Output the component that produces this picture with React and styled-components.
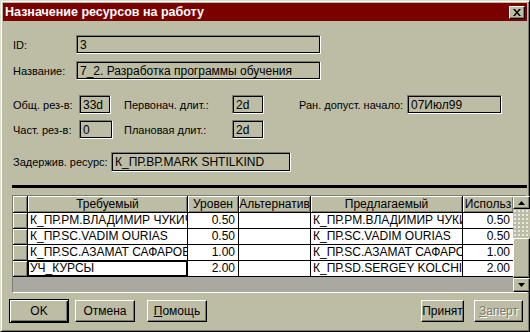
import styled, { createGlobalStyle } from "styled-components";

const KHAKI = "#bdbda5";
const SHADOW = "#7b7b6b";

const Global = createGlobalStyle`
  body {
    margin: 0;
    background: ${KHAKI};
    font-family: "Liberation Sans", Arial, sans-serif;
    font-size: 11px;
    color: #000;
  }
`;

const Window = styled.div`
  box-sizing: border-box;
  width: 530px;
  height: 332px;
  background: ${KHAKI};
  border: 1px solid;
  border-color: #dedece #000 #000 #dedece;
  box-shadow: inset 1px 1px 0 #fff, inset -1px -1px 0 ${SHADOW};
  padding: 2px;
  display: flex;
  flex-direction: column;
`;

const TitleBar = styled.div`
  height: 18px;
  background: #7b0000;
  color: #fff;
  font-weight: bold;
  font-size: 12.5px;
  display: flex;
  align-items: center;
  justify-content: space-between;
  padding: 0 2px 0 2px;
`;

const CloseButton = styled.div`
  box-sizing: border-box;
  width: 16px;
  height: 13px;
  background: ${KHAKI};
  border: 1px solid;
  border-color: #fff #000 #000 #fff;
  box-shadow: inset -1px -1px 0 ${SHADOW};
  display: flex;
  align-items: center;
  justify-content: center;
`;

const Body = styled.div`
  display: flex;
  flex-direction: column;
  padding: 0 0 0 6px;
`;

const Row = styled.div`
  display: flex;
  align-items: center;
  margin-top: ${(p) => p.$top}px;
  padding-left: 4px;
`;

const Label = styled.div`
  width: ${(p) => p.$w}px;
  flex: none;
  white-space: nowrap;
`;

const Field = styled.div`
  box-sizing: border-box;
  width: ${(p) => p.$w}px;
  height: ${(p) => p.$h || 19}px;
  flex: none;
  margin-right: ${(p) => p.$mr || 0}px;
  border: 1px solid;
  border-color: ${SHADOW} #fff #fff ${SHADOW};
  box-shadow: inset 1px 1px 0 #000, inset -1px -1px 0 #000;
  padding: 2px 3px 0;
  font-size: 12px;
  line-height: 14px;
  white-space: nowrap;
  overflow: hidden;
`;

const Divider = styled.div`
  margin: 13px 0 0 3px;
  height: 3px;
  background: #000;
`;

const TableFrame = styled.div`
  margin: 7px 0 0 3px;
  height: 98px;
  box-sizing: border-box;
  border: 1px solid;
  border-color: ${SHADOW} #fff #fff ${SHADOW};
  display: flex;
`;

const GridArea = styled.div`
  flex: 1;
  display: flex;
  flex-direction: column;
  background: #a9a9a1;
`;

const Grid = styled.div`
  display: grid;
  grid-template-columns: 14px 159px 50px 71px 151px 50px;
  grid-template-rows: 16px repeat(4, 15px);
  gap: 1px;
  background: #000;
  border-bottom: 1px solid #000;
`;

const HeadCell = styled.div`
  background: ${KHAKI};
  box-shadow: inset 1px 1px 0 #fff, inset -1px -1px 0 ${SHADOW};
  display: flex;
  align-items: center;
  justify-content: center;
  font-size: 12px;
  white-space: nowrap;
  overflow: hidden;
`;

const Cell = styled.div`
  background: #fff;
  display: flex;
  align-items: center;
  justify-content: ${(p) => (p.$num ? "flex-end" : "flex-start")};
  padding: ${(p) => (p.$num ? "0 3px 0 0" : "0 0 0 2px")};
  font-size: 12px;
  line-height: 15px;
  white-space: nowrap;
  overflow: hidden;
  box-sizing: border-box;
  box-shadow: ${(p) => (p.$focus ? "inset 0 0 0 1px #000" : "none")};
`;

const ScrollBar = styled.div`
  width: 17px;
  flex: none;
  display: flex;
  flex-direction: column;
`;

const ScrollButton = styled.div`
  box-sizing: border-box;
  height: ${(p) => p.$h}px;
  background: ${KHAKI};
  border: 1px solid;
  border-color: #fff #000 #000 #fff;
  box-shadow: inset -1px -1px 0 ${SHADOW};
  display: flex;
  align-items: center;
  justify-content: center;
`;

const Track = styled.div`
  height: ${(p) => p.$h}px;
  background-color: ${KHAKI};
  background-image: radial-gradient(#ecece0 0.7px, transparent 0.8px);
  background-size: 4px 4px;
`;

const Footer = styled.div`
  display: flex;
  align-items: center;
  margin: 6px 0 0 0;
`;

const Button = styled.div`
  box-sizing: border-box;
  width: ${(p) => p.$w}px;
  height: ${(p) => (p.$default ? 24 : 22)}px;
  margin-left: ${(p) => p.$ml}px;
  background: ${KHAKI};
  border: 1px solid;
  border-color: ${(p) => (p.$default ? "#000" : "#fff #000 #000 #fff")};
  box-shadow: ${(p) =>
    p.$default
      ? `inset 1px 1px 0 #fff, inset -1px -1px 0 #000, inset -2px -2px 0 ${SHADOW}`
      : `inset -1px -1px 0 ${SHADOW}`};
  display: flex;
  align-items: center;
  justify-content: center;
  font-size: 12px;
  color: ${(p) => (p.$disabled ? SHADOW : "#000")};
  text-shadow: ${(p) => (p.$disabled ? "1px 1px 0 #fff" : "none")};
`;

const Spacer = styled.div`
  flex: 1;
`;

const rows = [
  ["К_ПР.РМ.ВЛАДИМИР ЧУКИЧЕВ", "0.50", "К_ПР.РМ.ВЛАДИМИР ЧУКИЧЕВ", "0.50"],
  ["К_ПР.SC.VADIM OURIAS", "0.50", "К_ПР.SC.VADIM OURIAS", "0.50"],
  ["К_ПР.SC.АЗАМАТ САФАРОВ", "1.00", "К_ПР.SC.АЗАМАТ САФАРОВ", "1.00"],
  ["УЧ_КУРСЫ", "2.00", "К_ПР.SD.SERGEY KOLCHIN", "2.00"],
];

export default function App() {
  return (
    <>
      <Global />
      <Window>
        <TitleBar>
          <span>Назначение ресурсов на работу</span>
          <CloseButton>
            <svg width="8" height="7" viewBox="0 0 8 7">
              <path d="M0 0h2l2 2.5L6 0h2L5 3.5 8 7H6L4 4.5 2 7H0l3-3.5z" fill="#000" />
            </svg>
          </CloseButton>
        </TitleBar>
        <Body>
          <Row $top={14}>
            <Label $w={63}>ID:</Label>
            <Field $w={245}>3</Field>
          </Row>
          <Row $top={7}>
            <Label $w={63}>Название:</Label>
            <Field $w={245}>7_2. Разработка программы обучения</Field>
          </Row>
          <Row $top={15}>
            <Label $w={66}>Общ. рез-в:</Label>
            <Field $w={32} $mr={13}>33d</Field>
            <Label $w={108}>Первонач. длит.:</Label>
            <Field $w={32} $mr={35}>2d</Field>
            <Label $w={108}>Ран. допуст. начало:</Label>
            <Field $w={95}>07Июл99</Field>
          </Row>
          <Row $top={6}>
            <Label $w={66}>Част. рез-в:</Label>
            <Field $w={34} $mr={11}>0</Field>
            <Label $w={108}>Плановая длит.:</Label>
            <Field $w={32}>2d</Field>
          </Row>
          <Row $top={13}>
            <Label $w={98}>Задержив. ресурс:</Label>
            <Field $w={180} $h={20}>К_ПР.ВР.MARK SHTILKIND</Field>
          </Row>
          <Divider />
          <TableFrame>
            <GridArea>
              <Grid>
                <HeadCell />
                <HeadCell>Требуемый</HeadCell>
                <HeadCell>Уровен</HeadCell>
                <HeadCell>Альтернатив</HeadCell>
                <HeadCell>Предлагаемый</HeadCell>
                <HeadCell>Использ</HeadCell>
                {rows.map((r, i) => [
                  <HeadCell key={`h${i}`} />,
                  <Cell key={`a${i}`} $focus={i === 3}>{r[0]}</Cell>,
                  <Cell key={`b${i}`} $num>{r[1]}</Cell>,
                  <Cell key={`c${i}`} />,
                  <Cell key={`d${i}`}>{r[2]}</Cell>,
                  <Cell key={`e${i}`} $num>{r[3]}</Cell>,
                ])}
              </Grid>
            </GridArea>
            <ScrollBar>
              <ScrollButton $h={13}>
                <svg width="7" height="4" viewBox="0 0 7 4">
                  <path d="M3.5 0L7 4H0z" fill="#000" />
                </svg>
              </ScrollButton>
              <Track $h={29} />
              <ScrollButton $h={40} />
              <ScrollButton $h={14}>
                <svg width="7" height="4" viewBox="0 0 7 4">
                  <path d="M0 0h7L3.5 4z" fill="#000" />
                </svg>
              </ScrollButton>
            </ScrollBar>
          </TableFrame>
          <Footer>
            <Button $w={60} $ml={0} $default>OK</Button>
            <Button $w={60} $ml={6}>Отмена</Button>
            <Button $w={60} $ml={12}>
              <span><u>П</u>омощь</span>
            </Button>
            <Spacer />
            <Button $w={43} $ml={0}>Принят</Button>
            <Button $w={49} $ml={10} $disabled>
              <span><u>З</u>аперт</span>
            </Button>
            <div style={{ width: 4 }} />
          </Footer>
        </Body>
      </Window>
    </>
  );
}
